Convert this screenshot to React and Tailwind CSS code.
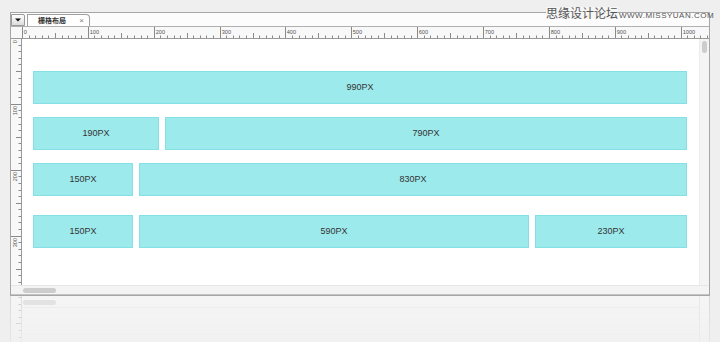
import React from "react";

const S = 0.6587;
const FONT = { fontFamily: '"Liberation Sans", Arial, sans-serif' };

function HRuler() {
  const els = [];
  for (let u = 0; u <= 1060; u += 10) {
    const x = Math.round(11 + u * S) + 0.5;
    if (x > 697) break;
    if (u % 100 === 0) {
      els.push(<line key={"l" + u} x1={x} x2={x} y1={0} y2={11} stroke="#8a8a8a" strokeWidth="1" />);
      els.push(
        <text key={"t" + u} x={x + 1.2} y={6.6} fontSize="5.6" fill="#555" fontFamily="Liberation Sans, Arial, sans-serif">
          {u}
        </text>
      );
    } else if (u % 50 === 0) {
      els.push(<line key={"l" + u} x1={x} x2={x} y1={6} y2={11} stroke="#8a8a8a" strokeWidth="1" />);
    } else {
      els.push(<line key={"l" + u} x1={x} x2={x} y1={8.5} y2={11} stroke="#8a8a8a" strokeWidth="1" />);
    }
  }
  return (
    <svg width="698" height="11" className="block">
      {els}
    </svg>
  );
}

function VRuler() {
  const els = [];
  for (let u = 0; u <= 380; u += 10) {
    const y = Math.round(u * S - 1) + 0.5;
    if (y > 246) break;
    if (u % 100 === 0) {
      els.push(<line key={"l" + u} x1={0} x2={10} y1={y} y2={y} stroke="#8a8a8a" strokeWidth="1" />);
      els.push(
        <text
          key={"t" + u}
          x={5.6}
          y={y + 1.5}
          fontSize="5.6"
          fill="#555"
          textAnchor="end"
          transform={`rotate(-90 5.6 ${y + 1.5})`}
          fontFamily="Liberation Sans, Arial, sans-serif"
        >
          {u}
        </text>
      );
    } else if (u % 50 === 0) {
      els.push(<line key={"l" + u} x1={5} x2={10} y1={y} y2={y} stroke="#8a8a8a" strokeWidth="1" />);
    } else {
      els.push(<line key={"l" + u} x1={7.5} x2={10} y1={y} y2={y} stroke="#8a8a8a" strokeWidth="1" />);
    }
  }
  return (
    <svg width="10" height="246" className="block">
      {els}
    </svg>
  );
}

function ReflectRuler() {
  const els = [];
  for (let u = 300; u <= 400; u += 10) {
    const y = Math.round(258 - u * S) + 0.5;
    if (y < 0 || y > 46) continue;
    const x1 = u % 100 === 0 ? 0 : u % 50 === 0 ? 5 : 7.5;
    els.push(<line key={u} x1={x1} x2={10} y1={y} y2={y} stroke="#c9c9c9" strokeWidth="1" />);
  }
  return (
    <svg width="10" height="46" className="block">
      {els}
    </svg>
  );
}

function Cell({ className, label }) {
  return (
    <div
      className={
        "h-[33px] bg-[#9deaec] border border-[#84e0e4] flex items-center justify-center text-[9px] text-[#333] " +
        className
      }
    >
      {label}
    </div>
  );
}

export default function App() {
  return (
    <div className="w-[720px] h-[342px] bg-[#efefef] relative overflow-hidden" style={FONT}>
      {/* window */}
      <div className="pt-[12px] pl-[10px]">
        <div className="w-[700px] h-[284px] border border-[#a6a6a6] bg-white flex flex-col">
          {/* tab strip */}
          <div className="h-[14px] border-b border-[#b0b0b0] bg-[#fcfcfc] flex items-end shrink-0">
            <div className="w-[14px] h-[12px] border border-[#9a9a9a] rounded-tr-[2px] bg-gradient-to-b from-white to-[#dcdcdc] flex items-center justify-center">
              <svg width="6" height="4" viewBox="0 0 6 4">
                <path d="M0 0.5 L6 0.5 L3 3.5 Z" fill="#111" />
              </svg>
            </div>
            <div className="ml-[2px] w-[63px] h-[12px] border-l border-t border-r border-[#a0a0a0] rounded-tr-[4px] bg-white flex items-center pl-[10px] pr-[5px]">
              <span
                className="text-[7px] leading-none text-[#333] font-bold"
                style={{ fontFamily: '"Noto Sans CJK SC", "Liberation Sans", sans-serif' }}
              >
                栅格布局
              </span>
              <span className="ml-auto text-[8px] leading-none text-[#777]">×</span>
            </div>
          </div>
          {/* top ruler */}
          <div className="h-[12px] border-b border-[#999] bg-[#f8f8f8] shrink-0">
            <HRuler />
          </div>
          {/* main */}
          <div className="flex flex-1 min-h-0">
            <div className="w-[11px] border-r border-[#999] bg-[#f8f8f8] shrink-0 overflow-hidden">
              <VRuler />
            </div>
            <div className="flex-1 bg-white pl-[11px] pt-[32px] flex flex-col">
              <div className="flex gap-[6px]">
                <Cell className="w-[654px]" label="990PX" />
              </div>
              <div className="flex gap-[6px] mt-[13px]">
                <Cell className="w-[126px]" label="190PX" />
                <Cell className="w-[522px]" label="790PX" />
              </div>
              <div className="flex gap-[6px] mt-[13px]">
                <Cell className="w-[100px]" label="150PX" />
                <Cell className="w-[548px]" label="830PX" />
              </div>
              <div className="flex gap-[6px] mt-[19px]">
                <Cell className="w-[100px]" label="150PX" />
                <Cell className="w-[390px]" label="590PX" />
                <Cell className="w-[152px]" label="230PX" />
              </div>
            </div>
            <div className="w-[10px] bg-[#f4f4f4] border-l border-[#ececec] shrink-0 pt-[2px] flex justify-center">
              <div className="w-[5px] h-[12px] rounded-full bg-[#cdcdcd]" />
            </div>
          </div>
          {/* bottom scrollbar */}
          <div className="h-[10px] bg-[#f4f4f4] border-t border-[#e6e6e6] border-b border-b-[#c4c4c4] shrink-0 flex items-center pl-[12px]">
            <div className="w-[33px] h-[5px] rounded-full bg-[#cdcdcd]" />
          </div>
        </div>
        {/* reflection */}
        <div className="w-[700px] h-[46px] border-x border-[#d8d8d8] bg-[#f5f5f5] flex [mask-image:linear-gradient(to_bottom,black,rgba(0,0,0,0.35))]">
          <div className="w-[11px] border-r border-[#dedede] shrink-0">
            <ReflectRuler />
          </div>
          <div className="flex-1 flex flex-col">
            <div className="h-[12px] border-b border-[#ececec] pl-[1px] pt-[4px]">
              <div className="w-[33px] h-[5px] rounded-full bg-[#e1e1e1]" />
            </div>
          </div>
          <div className="w-[10px] border-l border-[#e6e6e6] shrink-0" />
        </div>
      </div>
      {/* watermark */}
      <div
        className="absolute left-[546px] top-[7px] text-[12px] leading-none text-[#555] bg-[#f6f6f6]"
        style={{ fontFamily: '"Noto Sans CJK SC", sans-serif' }}
      >
        思缘设计论坛
      </div>
      <div className="absolute left-[619px] top-[12px] text-[8px] leading-none text-[#555] tracking-[0.5px]">
        WWW.MISSYUAN.COM
      </div>
    </div>
  );
}
